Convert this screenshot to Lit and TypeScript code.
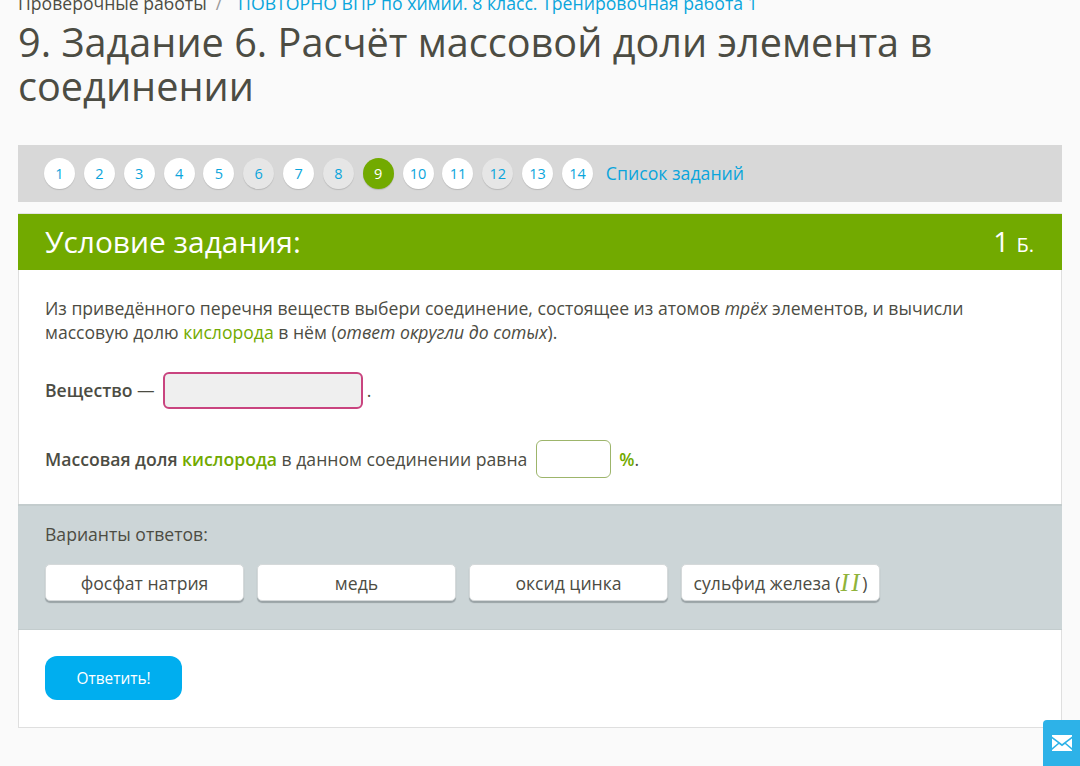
import { LitElement, html, css } from "lit";
import { customElement } from "lit/decorators.js";

const nums = [1, 2, 3, 4, 5, 6, 7, 8, 9, 10, 11, 12, 13, 14];
const done = new Set([6, 8, 12]);

@customElement("app-root")
export class AppRoot extends LitElement {
  static styles = css`
    :host { display: block; height: 766px; overflow: hidden; background: #fafafa; font-family: "Open Sans", sans-serif; color: #4c4c43; position: relative; font-size: 17.6px; }
    .page { padding: 0 18px; }
    .crumbs { height: 12px; line-height: 12px; font-size: 17.6px; overflow: visible; white-space: nowrap; position: relative; top: -3px; display: flex; gap: 9px; }
    .crumbs .sep { color: #999; }
    .crumbs a { color: #0aa5dc; margin-left: 7px; font-size: 17.67px; }
    h1 { margin: 8px 0 0; font-weight: 400; font-size: 39.65px; line-height: 44px; color: #4c4c43; }
    .nav { margin-top: 37px; height: 57px; background: #d8d8d8; display: flex; align-items: center; padding: 0 0 1px 26px; box-sizing: border-box; }
    .num { width: 31px; height: 31px; margin-right: 8.85px; border-radius: 50%; background: #fff; color: #0aa5dc; font-size: 14.5px; display: flex; align-items: center; justify-content: center; box-shadow: 0 1px 1px rgba(0,0,0,.15); flex: none; }
    .num.done { background: #e6e6e6; }
    .num.cur { background: #72aa00; color: #fff; }
    .nav a { margin-left: 4px; color: #0aa5dc; font-size: 17.7px; }
    .panel { margin-top: 11px; background: #fff; border: 1px solid #dfdfdf; border-top: 0; height: 515px; box-sizing: border-box; }
    .head { height: 57px; background: #72aa00; color: #fff; display: flex; justify-content: space-between; align-items: center; padding: 0 28px 0 27px; margin: 0 -1px; border-top: 1px solid #e5e5e5; box-sizing: border-box; }
    .head .t { font-size: 29.9px; position: relative; top: -1px; }
    .head .p { font-size: 28px; position: relative; top: -1px; }
    .head .p small { font-size: 20px; }
    .body { padding: 26px 26px 0; height: 234px; box-sizing: border-box; line-height: 24px; }
    .body p { margin: 0; }
    .g { color: #72aa00; }
    b { font-weight: 600; }
    .row { display: flex; align-items: center; }
    .r1 { margin-top: 27px; height: 38px; }
    .r2 { margin-top: 31px; height: 38px; }
    .slot { box-sizing: border-box; border-radius: 6px; flex: none; }
    .s1 { width: 200px; height: 37px; margin: 1px 4px 0 8px; background: #efefef; border: 2px solid #c9447f; }
    .s2 { width: 75px; height: 38px; margin: 0 8px 0 9px; background: #fff; border: 1.5px solid #9db56b; }
    .vars { height: 126px; background: #ccd5d7; border-top: 2px solid #c3cccd; border-bottom: 1px solid #c3cccd; padding: 16px 27px 0; box-sizing: border-box; margin: 0 -1px; }
    .vars .l { line-height: 24px; }
    .opts { margin-top: 18px; display: flex; gap: 13px; }
    .opt { width: 199px; height: 37px; box-sizing: border-box; background: #fff; border-radius: 5px; border: 1px solid #d5d9da; box-shadow: 0 2px 1px #9aa3a6; display: flex; align-items: center; justify-content: center; white-space: nowrap; }
    .opt i { font-family: "Liberation Serif", serif; font-size: 25px; line-height: 24px; color: #8fb33a; letter-spacing: 2.5px; }
    .foot { padding: 26px 26px; }
    button { display: block; width: 137px; height: 44px; border: 0; border-radius: 12px; background: #00aeef; color: #fff; font-family: inherit; font-size: 15.4px; padding: 0; }
    .mail { position: absolute; right: 0; top: 720px; width: 37px; height: 46px; background: #2db2e8; border-radius: 4px 0 0 0; display: flex; align-items: center; justify-content: center; }
  `;

  render() {
    return html`<div class="page">
        <div class="crumbs"><span>Проверочные работы</span><span class="sep">/</span><a>ПОВТОРНО ВПР по химии. 8 класс. Тренировочная работа 1</a></div>
        <h1>9. Задание 6. Расчёт массовой доли элемента в соединении</h1>
        <div class="nav">
          ${nums.map((n) => html`<span class="num ${done.has(n) ? "done" : ""} ${n === 9 ? "cur" : ""}">${n}</span>`)}
          <a>Список заданий</a>
        </div>
        <div class="panel">
          <div class="head"><span class="t">Условие задания:</span><span class="p">1 <small>Б.</small></span></div>
          <div class="body">
            <p>Из приведённого перечня веществ выбери соединение, состоящее из атомов <em>трёх</em> элементов, и вычисли массовую долю <span class="g">кислорода</span> в нём (<em>ответ округли до сотых</em>).</p>
            <div class="row r1"><b>Вещество</b>&nbsp;—<span class="slot s1"></span>.</div>
            <div class="row r2"><b>Массовая доля&nbsp;<span class="g">кислорода</span></b>&nbsp;в данном соединении равна<span class="slot s2"></span><b class="g">%</b>.</div>
          </div>
          <div class="vars">
            <div class="l">Варианты ответов:</div>
            <div class="opts">
              <div class="opt">фосфат натрия</div>
              <div class="opt">медь</div>
              <div class="opt">оксид цинка</div>
              <div class="opt">сульфид железа (<i>II</i>)</div>
            </div>
          </div>
          <div class="foot"><button>Ответить!</button></div>
        </div>
      </div>
      <div class="mail">
        <svg width="20" height="16" viewBox="0 0 20 16"><path fill="#fff" d="M0 1.5 10 9l10-7.5V0H0zM0 3.5V13l6-5zM20 3.5V13l-6-5zM0 15v1h20v-1l-7-6-3 2.300L7 9z"/></svg>
      </div>`;
  }
}
